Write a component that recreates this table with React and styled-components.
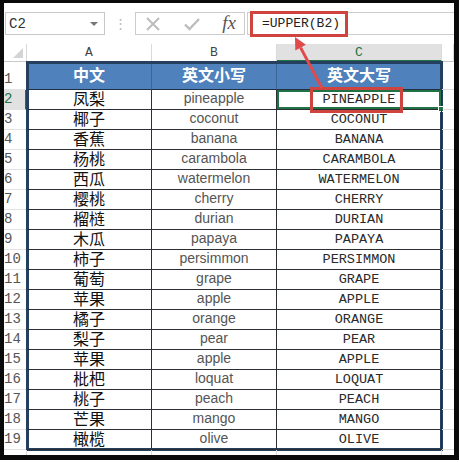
import React from "react";
import styled, { createGlobalStyle } from "styled-components";

const Global = createGlobalStyle`
  html, body { margin: 0; padding: 0; background: #fff; }
  * { box-sizing: border-box; }
`;

const MONO = `"Liberation Mono", "DejaVu Sans Mono", monospace`;
const SANS = `"Liberation Sans", Arial, sans-serif`;
const CJK = `"Liberation Sans", "Noto Sans CJK SC", sans-serif`;
const GREEN = "#217346";
const RED = "#d0443f";

const Frame = styled.div`
  position: relative;
  width: 459px;
  height: 460px;
  border-style: solid;
  border-color: #0a0a0a;
  border-width: 3px 5px 5px 4px;
  background: #fff;
  overflow: hidden;
  display: flex;
  flex-direction: column;
`;

const Toolbar = styled.div`
  height: 41px;
  flex: none;
  display: flex;
  align-items: flex-start;
  padding: 9px 0 0 1px;
`;

const NameBox = styled.div`
  width: 100px;
  height: 23px;
  border: 1px solid #c8c8c8;
  display: flex;
  align-items: center;
  justify-content: space-between;
  padding: 0 6px 0 3px;
  font-family: ${MONO};
  font-size: 14px;
  line-height: 1;
  color: #333;
`;

const DropArrow = styled.span`
  width: 0;
  height: 0;
  border-left: 4px solid transparent;
  border-right: 4px solid transparent;
  border-top: 4px solid #777;
`;

const Dots = styled.div`
  width: 30px;
  height: 23px;
  display: flex;
  align-items: center;
  justify-content: center;
  color: #b8b8b8;
  font-family: ${SANS};
  font-size: 13px;
  line-height: 1;
`;

const FxBox = styled.div`
  width: 110px;
  height: 23px;
  border: 1px solid #cdcdcd;
  display: flex;
  align-items: center;
  padding: 0 8px 0 9px;
  justify-content: space-between;
`;

const FxText = styled.span`
  font-family: "Liberation Serif", "DejaVu Serif", serif;
  font-style: italic;
  font-size: 19px;
  color: #555;
  line-height: 1;
  margin-top: -2px;
`;

const FormulaInput = styled.div`
  flex: 1;
  margin-left: 2px;
  height: 23px;
  border: 1px solid #cdcdcd;
  border-right: none;
  display: flex;
  align-items: center;
  padding-left: 2px;
  overflow: visible;
`;

const RedMark = styled.span`
  height: 26px;
  flex: none;
  display: inline-flex;
  align-items: center;
  border: 3px solid ${RED};
  padding: 0 5px 0 9px;
  font-family: ${MONO};
  font-size: 13px;
  line-height: 1;
  color: #222;
`;

const HeadRow = styled.div`
  height: 18px;
  flex: none;
  display: flex;
`;

const Corner = styled.div`
  width: 23px;
  display: flex;
  align-items: flex-end;
  justify-content: flex-end;
  padding: 0 3px 3px 0;
  border-bottom: 1px solid #c8c8c8;
  border-right: 1px solid #d8d8d8;
`;

const CornerTri = styled.span`
  width: 0;
  height: 0;
  border-left: 10px solid transparent;
  border-bottom: 10px solid #d4d4d4;
`;

const ColHead = styled.div`
  width: ${(p) => p.$w}px;
  flex: ${(p) => (p.$w ? "none" : "1")};
  display: flex;
  align-items: center;
  justify-content: center;
  font-family: ${MONO};
  font-size: 13px;
  line-height: 1;
  color: ${(p) => (p.$active ? GREEN : "#444")};
  background: ${(p) => (p.$active ? "#e1e1e1" : "#fff")};
  border-right: 1px solid #dadada;
  border-bottom: ${(p) => (p.$active ? `2px solid ${GREEN}` : "1px solid #c8c8c8")};
`;

const Body = styled.div`
  display: flex;
  flex: none;
`;

const RowHeads = styled.div`
  width: 23px;
  display: flex;
  flex-direction: column;
`;

const RowLabel = styled.div`
  height: ${(p) => p.$h}px;
  display: flex;
  align-items: flex-end;
  padding-bottom: 3px;
  font-family: ${MONO};
  font-size: 14px;
  line-height: 1;
  color: ${(p) => (p.$active ? GREEN : "#555")};
  background: ${(p) => (p.$active ? "#e1e1e1" : "#fff")};
  border-bottom: 1px solid #e2e2e2;
  border-right: ${(p) => (p.$active ? `2px solid ${GREEN}` : "1px solid #d8d8d8")};
`;

const Table = styled.div`
  display: grid;
  grid-template-columns: 125px 125px 165px;
  grid-template-rows: 28px repeat(18, 20px);
  outline: 3px solid #25405f;
  outline-offset: -2px;
`;

const HeadCell = styled.div`
  background: #4f81bd;
  color: #fff;
  font-family: ${CJK};
  font-weight: 700;
  font-size: 16px;
  line-height: 1;
  display: flex;
  align-items: center;
  justify-content: center;
  border-right: 1px solid #3b6797;
  border-bottom: 1px solid #1f3045;
`;

const Cell = styled.div`
  position: relative;
  display: flex;
  align-items: center;
  justify-content: center;
  border-right: 1px solid #2b2f35;
  border-bottom: 1px solid #2b2f35;
  white-space: nowrap;
  line-height: 1;
  font-family: ${(p) =>
    p.$kind === "cn" ? CJK : p.$kind === "lower" ? SANS : MONO};
  font-size: ${(p) => (p.$kind === "cn" ? "16px" : p.$kind === "lower" ? "14px" : "13.5px")};
  color: ${(p) => (p.$kind === "lower" ? "#555" : p.$kind === "upper" ? "#2a2a2a" : "#111")};
  padding-bottom: ${(p) => (p.$kind === "lower" ? "3px" : "0")};
  box-shadow: ${(p) => (p.$selected ? `inset 0 0 0 2px ${GREEN}` : "none")};
`;

const CellMark = styled.span`
  position: absolute;
  left: 33px;
  top: -3px;
  width: 93px;
  height: 26px;
  border: 3px solid ${RED};
`;

const Handle = styled.span`
  position: absolute;
  right: -3px;
  bottom: -3px;
  width: 6px;
  height: 6px;
  background: ${GREEN};
  border: 1px solid #fff;
`;

const RightFill = styled.div`
  flex: 1;
  display: flex;
  flex-direction: column;
`;

const FillCell = styled.div`
  height: ${(p) => p.$h}px;
  border-bottom: 1px solid #dcdcdc;
`;

const BottomRow = styled.div`
  height: 20px;
  display: flex;
  flex: none;
`;

const BlankCell = styled.div`
  width: ${(p) => p.$w}px;
  border-right: 1px solid #dcdcdc;
`;

const Overlay = styled.svg`
  position: absolute;
  left: 0;
  top: 0;
  width: 450px;
  height: 452px;
  pointer-events: none;
`;

const rows = [
  ["凤梨", "pineapple"],
  ["椰子", "coconut"],
  ["香蕉", "banana"],
  ["杨桃", "carambola"],
  ["西瓜", "watermelon"],
  ["樱桃", "cherry"],
  ["榴梿", "durian"],
  ["木瓜", "papaya"],
  ["柿子", "persimmon"],
  ["葡萄", "grape"],
  ["苹果", "apple"],
  ["橘子", "orange"],
  ["梨子", "pear"],
  ["苹果", "apple"],
  ["枇杷", "loquat"],
  ["桃子", "peach"],
  ["芒果", "mango"],
  ["橄榄", "olive"],
];

const XIcon = () => (
  <svg width="16" height="16" viewBox="0 0 16 16">
    <path d="M2 2 L14 14 M14 2 L2 14" stroke="#bdbdbd" strokeWidth="2" fill="none" />
  </svg>
);

const CheckIcon = () => (
  <svg width="18" height="16" viewBox="0 0 18 16">
    <path d="M2 8.5 L6.5 13 L16 3" stroke="#bdbdbd" strokeWidth="2.4" fill="none" />
  </svg>
);

export default function App() {
  const heights = [28, ...rows.map(() => 20)];
  return (
    <>
      <Global />
      <Frame>
        <Toolbar>
          <NameBox>
            <span>C2</span>
            <DropArrow />
          </NameBox>
          <Dots>⋮</Dots>
          <FxBox>
            <XIcon />
            <CheckIcon />
            <FxText>fx</FxText>
          </FxBox>
          <FormulaInput>
            <RedMark>=UPPER(B2)</RedMark>
          </FormulaInput>
        </Toolbar>

        <HeadRow>
          <Corner>
            <CornerTri />
          </Corner>
          <ColHead $w={125}>A</ColHead>
          <ColHead $w={125}>B</ColHead>
          <ColHead $w={165} $active>
            C
          </ColHead>
          <ColHead />
        </HeadRow>

        <Body>
          <RowHeads>
            {heights.map((h, i) => (
              <RowLabel key={i} $h={h} $active={i === 1}>
                {i + 1}
              </RowLabel>
            ))}
          </RowHeads>
          <Table>
            <HeadCell>中文</HeadCell>
            <HeadCell>英文小写</HeadCell>
            <HeadCell>英文大写</HeadCell>
            {rows.map(([cn, en], i) => (
              <React.Fragment key={i}>
                <Cell $kind="cn">{cn}</Cell>
                <Cell $kind="lower">{en}</Cell>
                <Cell $kind="upper" $selected={i === 0}>
                  {en.toUpperCase()}
                  {i === 0 && (
                    <>
                      <CellMark />
                      <Handle />
                    </>
                  )}
                </Cell>
              </React.Fragment>
            ))}
          </Table>
          <RightFill>
            {heights.map((h, i) => (
              <FillCell key={i} $h={h} />
            ))}
          </RightFill>
        </Body>

        <BottomRow>
          <BlankCell $w={23} />
          <BlankCell $w={125} />
          <BlankCell $w={125} />
          <BlankCell $w={165} />
        </BottomRow>

        <Overlay viewBox="0 0 450 452">
          <line x1="318" y1="85" x2="296.6" y2="44.6" stroke="#e04a4a" strokeWidth="3" />
          <polygon points="291,34 301.9,41.8 291.3,47.4" fill="#e04a4a" />
        </Overlay>
      </Frame>
    </>
  );
}
